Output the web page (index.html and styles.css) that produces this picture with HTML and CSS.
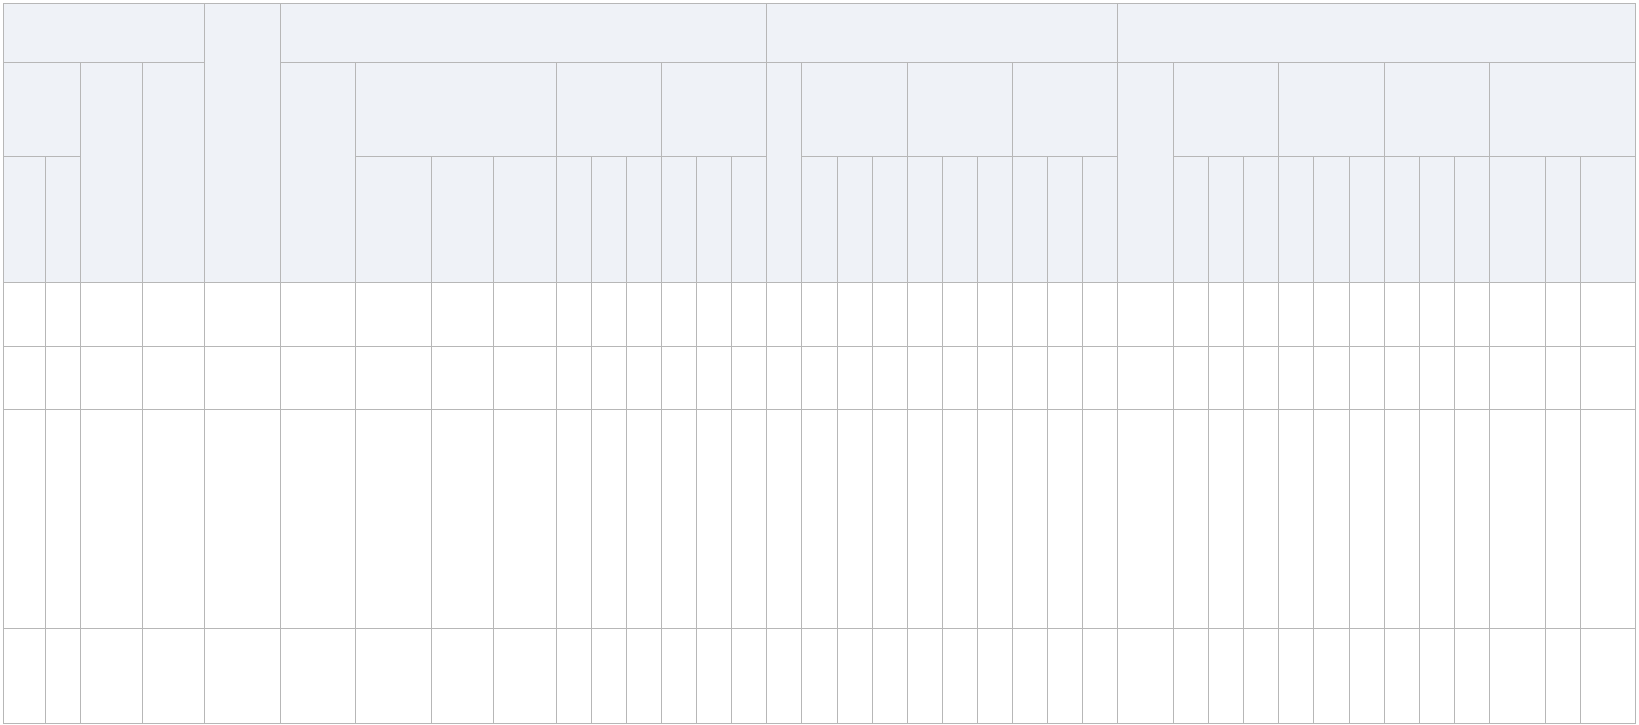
FILE: index.html
```html
<!DOCTYPE html>
<html lang="en">
<head>
    <meta charset="UTF-8">
    <meta name="viewport" content="width=device-width, initial-scale=1.0">
    <title>Report grid</title>
    <link rel="stylesheet" href="styles.css">
</head>
<body>

<!-- Empty report grid -->
<table class="grid">
    <colgroup>
        <col class="w42"><col class="w35"><col class="w62"><col class="w62"><col class="w76">
        <col class="w75"><col class="w76"><col class="w62"><col class="w63">
        <col class="w35"><col class="w35"><col class="w35"><col class="w35"><col class="w35"><col class="w35">
        <col class="w35">
        <col class="w36"><col class="w35"><col class="w35"><col class="w35"><col class="w35"><col class="w35"><col class="w35"><col class="w35"><col class="w35">
        <col class="w56">
        <col class="w35"><col class="w35"><col class="w35"><col class="w35"><col class="w36"><col class="w35"><col class="w35"><col class="w35"><col class="w35">
        <col class="w56"><col class="w35"><col class="w55">
    </colgroup>
    <thead>
        <tr class="head-1">
            <th colspan="4"></th>
            <th rowspan="3"></th>
            <th colspan="10"></th>
            <th colspan="10"></th>
            <th colspan="13"></th>
        </tr>
        <tr class="head-2">
            <th colspan="2"></th>
            <th rowspan="2"></th>
            <th rowspan="2"></th>
            <th rowspan="2"></th>
            <th colspan="3"></th>
            <th colspan="3"></th>
            <th colspan="3"></th>
            <th rowspan="2"></th>
            <th colspan="3"></th>
            <th colspan="3"></th>
            <th colspan="3"></th>
            <th rowspan="2"></th>
            <th colspan="3"></th>
            <th colspan="3"></th>
            <th colspan="3"></th>
            <th colspan="3"></th>
        </tr>
        <tr class="head-3">
            <th></th><th></th>
            <th></th><th></th><th></th><th></th><th></th><th></th><th></th><th></th><th></th>
            <th></th><th></th><th></th><th></th><th></th><th></th><th></th><th></th><th></th>
            <th></th><th></th><th></th><th></th><th></th><th></th><th></th><th></th><th></th><th></th><th></th><th></th>
        </tr>
    </thead>
    <tbody id="gridBody">
        <tr class="row-1"></tr>
        <tr class="row-2"></tr>
        <tr class="row-3"></tr>
        <tr class="row-4"></tr>
    </tbody>
</table>

<script>
    // fill every body row with 38 empty cells
    document.querySelectorAll("#gridBody tr").forEach(function(row) {
        for (let i = 0; i < 38; i++) {
            row.appendChild(document.createElement("td"));
        }
    });
</script>

</body>
</html>
```
FILE: styles.css
```css
body {
    font-family: "Liberation Sans", Arial, sans-serif;
    background-color: #ffffff;
    margin: 3px 3px 0 3px;
    overflow: hidden;
}
.grid {
    width: 1633px;
    table-layout: fixed;
    border-collapse: collapse;
}
.grid th,
.grid td {
    border: 1px solid #b7b7b7;
    padding: 0;
}
.grid th {
    background-color: #eff2f7;
}
.w35 { width: 35px; }
.w36 { width: 36px; }
.w42 { width: 42px; }
.w55 { width: 55px; }
.w56 { width: 56px; }
.w62 { width: 62px; }
.w63 { width: 63px; }
.w75 { width: 75px; }
.w76 { width: 76px; }
.head-1 { height: 59px; }
.head-2 { height: 94px; }
.head-3 { height: 126px; }
.row-1 { height: 64px; }
.row-2 { height: 63px; }
.row-3 { height: 219px; }
.row-4 { height: 95px; }
```
